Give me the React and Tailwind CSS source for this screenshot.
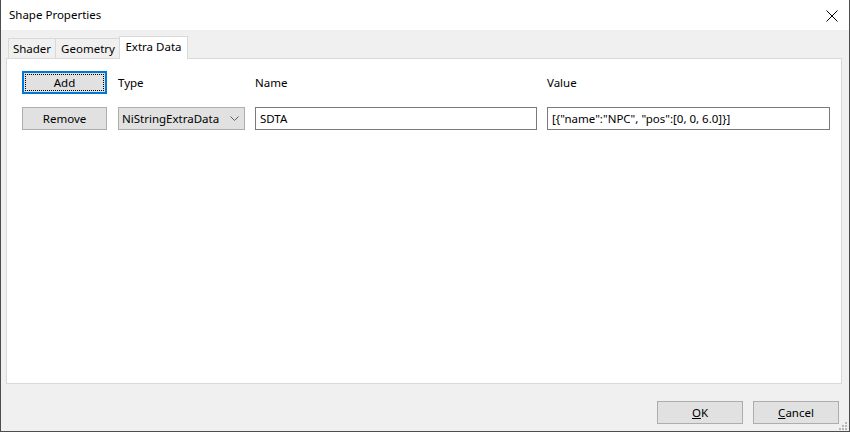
import React from "react";

const font = { fontFamily: '"Noto Sans", "Segoe UI", sans-serif' };

function Btn({ children, focused, className = "w-[85px]" }) {
  if (focused) {
    return (
      <div className={`h-[23px] border-2 border-[#0078d7] bg-[#e1e1e1] p-px ${className}`}>
        <div className="flex h-full w-full items-center justify-center border border-dotted border-black text-black">
          {children}
        </div>
      </div>
    );
  }
  return (
    <div className={`flex h-[23px] items-center justify-center border border-[#adadad] bg-[#e1e1e1] text-black ${className}`}>
      {children}
    </div>
  );
}

export default function App() {
  return (
    <div style={font} className="flex h-[432px] w-[850px] flex-col border-x border-b border-[#4d4d4d] bg-[#f0f0f0] text-[11.5px] leading-[16px] text-black">
      {/* title bar */}
      <div className="flex h-[30px] shrink-0 items-center justify-between bg-white pl-[8px] pr-[11px]">
        <span className="pb-[1px]">Shape Properties</span>
        <svg width="12" height="12" viewBox="0 0 12 12" className="mt-[1px]">
          <path d="M0.5 0.5 L11.5 11.5 M11.5 0.5 L0.5 11.5" stroke="#000" strokeWidth="1" fill="none" />
        </svg>
      </div>

      {/* body */}
      <div className="flex flex-1 flex-col pl-[5px] pr-[7px] pt-[6px]">
        {/* tabs */}
        <div className="flex h-[22px] items-end pl-[2px]">
          <div className="flex h-[20px] w-[48px] items-center justify-center border border-b-0 border-[#d9d9d9] bg-[#f0f0f0] pt-[1px]">
            Shader
          </div>
          <div className="flex h-[20px] w-[65px] items-center justify-center border border-b-0 border-l-0 border-[#d9d9d9] bg-[#f0f0f0] pt-[1px]">
            Geometry
          </div>
          <div className="relative z-10 -mb-px -ml-[2px] flex h-[23px] w-[69px] items-center justify-center border border-b-0 border-[#d9d9d9] bg-white pb-[2px]">
            Extra Data
          </div>
        </div>
        {/* pane */}
        <div className="h-[326px] border border-[#d9d9d9] bg-white pl-[15px] pt-[12px]">
          <div className="flex items-center gap-[11px]">
            <Btn focused>Add</Btn>
            <div className="flex gap-[10px] pt-[1px]">
              <div className="w-[127px]">Type</div>
              <div className="w-[282px]">Name</div>
              <div className="w-[283px]">Value</div>
            </div>
          </div>
          <div className="mt-[13px] flex items-center gap-[11px]">
            <Btn>Remove</Btn>
            <div className="flex gap-[10px]">
              <div className="flex h-[23px] w-[127px] items-center justify-between border border-[#adadad] bg-[#e1e1e1] pl-[3px] pr-[5px]">
                <span>NiStringExtraData</span>
                <svg width="9" height="5" viewBox="0 0 9 5">
                  <path d="M0.5 0.5 L4.5 4.5 L8.5 0.5" stroke="#606060" strokeWidth="1" fill="none" />
                </svg>
              </div>
              <div className="flex h-[23px] w-[282px] items-center border border-[#7a7a7a] bg-white pl-[4px]">
                SDTA
              </div>
              <div className="flex h-[23px] w-[283px] items-center border border-[#7a7a7a] bg-white pl-[4px]">
                {'[{"name":"NPC", "pos":[0, 0, 6.0]}]'}
              </div>
            </div>
          </div>
        </div>
        {/* footer */}
        <div className="relative flex flex-1 items-start justify-end gap-[10px] pr-[3px] pt-[17px]">
          <Btn className="w-[86px]">
            <span><span className="underline">O</span>K</span>
          </Btn>
          <Btn className="w-[86px]">
            <span><span className="underline">C</span>ancel</span>
          </Btn>
          <svg width="10" height="10" viewBox="0 0 10 10" className="absolute bottom-0 right-[-6px]">
            <rect x="7" y="1" width="2" height="2" fill="#b8b8b8" />
            <rect x="4" y="4" width="2" height="2" fill="#b8b8b8" />
            <rect x="7" y="4" width="2" height="2" fill="#b8b8b8" />
            <rect x="1" y="7" width="2" height="2" fill="#b8b8b8" />
            <rect x="4" y="7" width="2" height="2" fill="#b8b8b8" />
            <rect x="7" y="7" width="2" height="2" fill="#b8b8b8" />
          </svg>
        </div>
      </div>
    </div>
  );
}
